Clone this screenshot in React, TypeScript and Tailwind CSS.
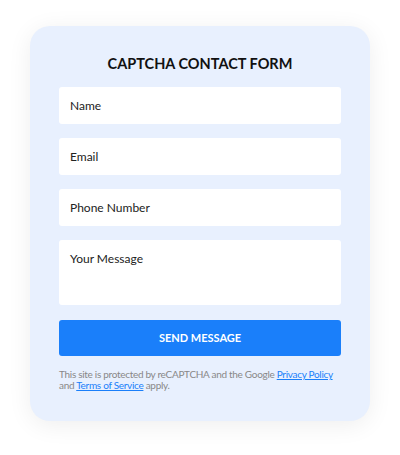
export default function App() {
  const font = { fontFamily: 'Lato, "Noto Sans", sans-serif' };
  return (
    <div className="w-[400px] h-[455px] bg-white pt-[26px] px-[30px]" style={font}>
      <div className="w-[340px] h-[395px] rounded-[20px] bg-[#e8f0fe] shadow-[0_4px_24px_rgba(0,0,0,0.07)] px-[29px] pt-[28px]">
        <h1 className="text-center text-[14.5px] leading-[20px] font-bold text-[#111]">CAPTCHA CONTACT FORM</h1>
        <form className="mt-[13px] flex flex-col">
          <div className="h-[37px] bg-white rounded-[3px] pl-[11px] flex items-center text-[12px] text-[#222]">Name</div>
          <div className="mt-[14px] h-[37px] bg-white rounded-[3px] pl-[11px] flex items-center text-[12px] text-[#222]">Email</div>
          <div className="mt-[14px] h-[37px] bg-white rounded-[3px] pl-[11px] flex items-center text-[12px] text-[#222]">Phone Number</div>
          <div className="mt-[14px] h-[65px] bg-white rounded-[3px] pl-[11px] pt-[10px] text-[12px] leading-[17px] text-[#222]">Your Message</div>
          <button type="button" className="mt-[15px] h-[36px] bg-[#1a7ffa] rounded-[3px] text-white text-[11px] font-bold">SEND MESSAGE</button>
          <p className="mt-[13px] text-[10px] leading-[11px] tracking-[-0.3px] text-[#888]">
            This site is protected by reCAPTCHA and the Google <a className="text-[#1a7ffa] underline whitespace-nowrap">Privacy Policy</a> and <a className="text-[#1a7ffa] underline">Terms of Service</a> apply.
          </p>
        </form>
      </div>
    </div>
  );
}
